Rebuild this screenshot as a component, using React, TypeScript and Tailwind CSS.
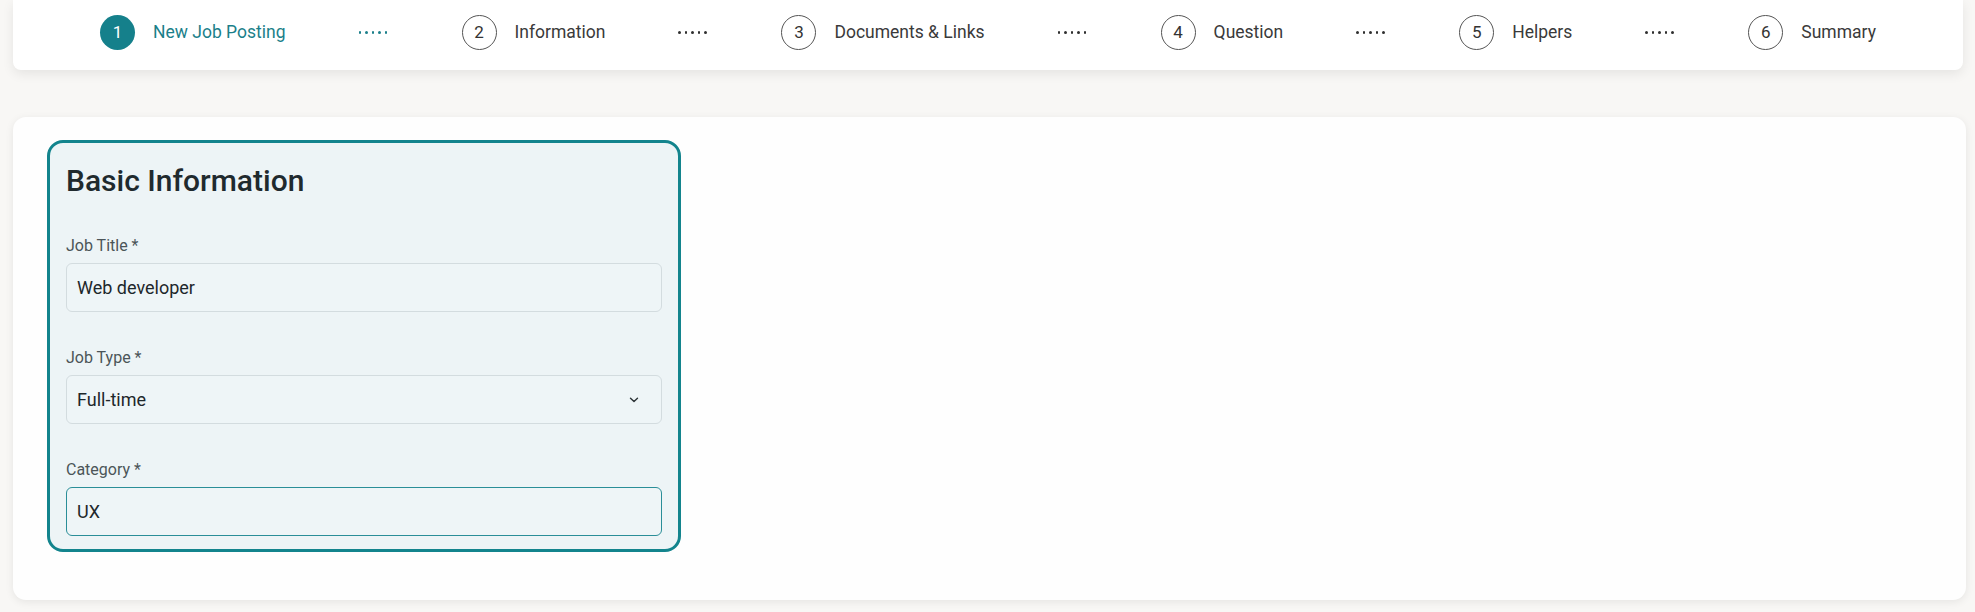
import React from "react";

const steps = [
  { n: 1, label: "New Job Posting" },
  { n: 2, label: "Information" },
  { n: 3, label: "Documents & Links" },
  { n: 4, label: "Question" },
  { n: 5, label: "Helpers" },
  { n: 6, label: "Summary" },
];

function Dots({ active }: { active: boolean }) {
  return (
    <div className="flex w-[30px] items-center gap-[4px]">
      {[0, 1, 2, 3, 4].map((i) => (
        <span
          key={i}
          className={`h-[2.5px] w-[2.5px] rounded-full ${active ? "bg-[#1b7f8a]" : "bg-[#2f2f2f]"}`}
        />
      ))}
    </div>
  );
}

function Field({
  label,
  value,
  select,
  focused,
}: {
  label: string;
  value: string;
  select?: boolean;
  focused?: boolean;
}) {
  return (
    <div>
      <div className="text-[16px] leading-[20px] text-[#4b5558]">{label}</div>
      <div
        className={`mt-[7px] flex h-[49px] items-center justify-between rounded-[6px] border bg-[#eef5f7] pl-[10px] pr-[22px] text-[18px] text-[#1d272b] ${
          focused ? "border-[#2a8e98]" : "border-[#d3dcdf]"
        }`}
      >
        <span>{value}</span>
        {select && (
          <svg width="10" height="6" viewBox="0 0 10 6" fill="none">
            <path d="M1.5 1.2 5 4.6 8.5 1.2" stroke="#2b3336" strokeWidth="1.4" strokeLinecap="round" strokeLinejoin="round" />
          </svg>
        )}
      </div>
    </div>
  );
}

export default function App() {
  return (
    <div className="min-h-[612px] bg-[#f8f7f5] font-['Roboto',sans-serif] pb-[14px]">
      {/* stepper */}
      <div className="ml-[13px] mr-[12px] flex h-[70px] items-start justify-center gap-[73px] rounded-b-[8px] bg-white pt-[15px] shadow-[0_4px_12px_rgba(0,0,0,0.08)]">
        {steps.map((s, i) => (
          <React.Fragment key={s.n}>
            {i > 0 && (
              <div className="flex h-[35px] items-center">
                <Dots active={i === 1} />
              </div>
            )}
            <div className="flex h-[35px] items-center gap-[18px]">
              <div
                className={`flex h-[35px] w-[35px] items-center justify-center rounded-full text-[17px] ${
                  s.n === 1
                    ? "bg-[#15808b] text-white"
                    : "border border-[#555555] text-[#333333]"
                }`}
              >
                {s.n}
              </div>
              <span className={`text-[17.5px] ${s.n === 1 ? "text-[#1b7f8a]" : "text-[#3a3a3a]"}`}>
                {s.label}
              </span>
            </div>
          </React.Fragment>
        ))}
      </div>

      {/* main card */}
      <div className="ml-[13px] mr-[9px] mt-[47px] rounded-[13px] bg-[#fefefe] pb-[48px] pl-[34px] pt-[23px] shadow-[0_2px_8px_rgba(0,0,0,0.08)]">
        <div className="w-[634px] rounded-[16px] border-[3px] border-[#13848d] bg-[#edf4f6] px-[16px] pb-[13px] pt-[20px]">
          <h2 className="text-[30px] font-medium leading-[36px] text-[#1f2a2e]">Basic Information</h2>
          <div className="mt-[37px] flex flex-col gap-[36px]">
            <Field label="Job Title *" value="Web developer" />
            <Field label="Job Type *" value="Full-time" select />
            <Field label="Category *" value="UX" focused />
          </div>
        </div>
      </div>
    </div>
  );
}
